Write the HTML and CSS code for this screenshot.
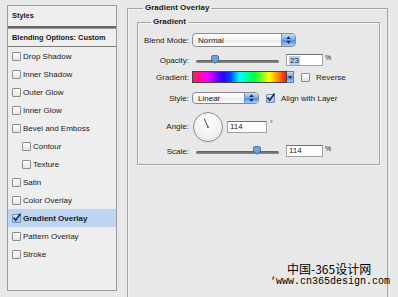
FILE: index.html
```html
<!DOCTYPE html>
<html>
<head>
<meta charset="utf-8">
<title>Layer Style</title>
<link rel="stylesheet" href="styles.css">
</head>
<body>
<div class="dialog">
  <div class="styles-panel">
    <div class="hdr hdr-styles">Styles</div>
    <div class="hdr hdr-blend">Blending Options: Custom</div>
    <ul class="fx-list">
      <li class="fx"><span class="cb"></span>Drop Shadow</li>
      <li class="fx"><span class="cb"></span>Inner Shadow</li>
      <li class="fx"><span class="cb"></span>Outer Glow</li>
      <li class="fx"><span class="cb"></span>Inner Glow</li>
      <li class="fx"><span class="cb"></span>Bevel and Emboss</li>
      <li class="fx sub"><span class="cb"></span>Contour</li>
      <li class="fx sub"><span class="cb"></span>Texture</li>
      <li class="fx"><span class="cb"></span>Satin</li>
      <li class="fx"><span class="cb"></span>Color Overlay</li>
      <li class="fx active"><span class="cb checked"><svg viewBox="0 0 9 9" width="9" height="9"><path d="M1.6 4.4 L3.7 7.2 L8.6 0.6" fill="none" stroke="#1b2a5e" stroke-width="1.7"/></svg></span>Gradient Overlay</li>
      <li class="fx"><span class="cb"></span>Pattern Overlay</li>
      <li class="fx"><span class="cb"></span>Stroke</li>
    </ul>
  </div>

  <fieldset class="group outer">
    <legend>Gradient Overlay</legend>
    <fieldset class="group inner">
      <legend>Gradient</legend>
      <div class="rows">
        <div class="row r-blend">
          <span class="lbl">Blend Mode:</span>
          <div class="popup w-blend">
            <span class="popup-text">Normal</span>
            <span class="stepper"><svg viewBox="0 0 13 12" width="13" height="12"><path d="M4.2 5 L6.5 2.2 L8.8 5 Z M4.2 7 L6.5 9.8 L8.8 7 Z" fill="#1a2c57"/></svg></span>
          </div>
        </div>
        <div class="row r-opacity">
          <span class="lbl">Opacity:</span>
          <div class="slider"><span class="track"></span><span class="thumb" style="left:23%"><svg viewBox="0 0 8 9" width="8" height="9"><path d="M0.5 2 Q0.5 0.5 2 0.5 H6 Q7.5 0.5 7.5 2 V5 L4 8.5 L0.5 5 Z" fill="#6f9fdc" stroke="#3d63a0" stroke-width="0.8"/></svg></span></div>
          <span class="field w-num"><span class="sel">23</span></span>
          <span class="unit">%</span>
        </div>
        <div class="row r-gradient">
          <span class="lbl">Gradient:</span>
          <span class="grad"></span>
          <span class="grad-btn"><svg viewBox="0 0 7 12" width="7" height="12"><path d="M1.3 5 L3.5 8 L5.7 5 Z" fill="#101b3a"/></svg></span>
          <span class="cb cb-gap"></span>
          <span class="cb-label">Reverse</span>
        </div>
        <div class="row r-style">
          <span class="lbl">Style:</span>
          <div class="popup w-style">
            <span class="popup-text">Linear</span>
            <span class="stepper"><svg viewBox="0 0 13 12" width="13" height="12"><path d="M4.2 5 L6.5 2.2 L8.8 5 Z M4.2 7 L6.5 9.8 L8.8 7 Z" fill="#1a2c57"/></svg></span>
          </div>
          <span class="cb checked cb-gap"><svg viewBox="0 0 9 9" width="9" height="9"><path d="M1.6 4.4 L3.7 7.2 L8.6 0.6" fill="none" stroke="#1b2a5e" stroke-width="1.7"/></svg></span>
          <span class="cb-label">Align with Layer</span>
        </div>
        <div class="row r-angle">
          <span class="lbl">Angle:</span>
          <span class="dial"><svg viewBox="0 0 28 28" width="28" height="28"><line x1="14" y1="14" x2="10.2" y2="5.6" stroke="#4a4a4a" stroke-width="1"/><circle cx="14" cy="14" r="0.9" fill="#4a4a4a"/></svg></span>
          <span class="field w-angle">114</span>
          <span class="deg">°</span>
        </div>
        <div class="row r-scale">
          <span class="lbl">Scale:</span>
          <div class="slider"><span class="track"></span><span class="thumb" style="left:74%"><svg viewBox="0 0 8 9" width="8" height="9"><path d="M0.5 2 Q0.5 0.5 2 0.5 H6 Q7.5 0.5 7.5 2 V5 L4 8.5 L0.5 5 Z" fill="#6f9fdc" stroke="#3d63a0" stroke-width="0.8"/></svg></span></div>
          <span class="field w-num">114</span>
          <span class="unit">%</span>
        </div>
      </div>
    </fieldset>
  </fieldset>
</div>

<div class="watermark">
  <div class="wm-cn">中国-365设计网</div>
  <div class="wm-url">‘www.cn365design.com</div>
</div>
</body>
</html>
```

FILE: styles.css
```css
html, body {
  margin: 0;
  padding: 0;
}

body {
  width: 398px;
  height: 297px;
  overflow: hidden;
  position: relative;
  background: #e8e8e8;
  font-family: "Liberation Sans", Arial, sans-serif;
  font-size: 8px;
  color: #1a1a1a;
}

.dialog {
  display: flex;
  align-items: flex-start;
  padding-left: 7px;
}

/* ---------- left styles list ---------- */
.styles-panel {
  margin-top: 5px;
  width: 110px;
  height: 286px;
  box-sizing: border-box;
  border: 1px solid #9b9b9b;
  background: #eeeeee;
  flex: none;
}

.hdr {
  padding-left: 4px;
  font-weight: bold;
  font-size: 7.4px;
  white-space: nowrap;
}

.hdr-styles {
  height: 20px;
  line-height: 20px;
  border-bottom: 2px solid #666666;
}

.hdr-blend {
  height: 17px;
  line-height: 17px;
  border-top: 1px solid #9a9a9a;
  border-bottom: 1px solid #7b7b7b;
}

.fx-list {
  list-style: none;
  margin: 0;
  padding: 0;
}

.fx {
  height: 18px;
  display: flex;
  align-items: center;
  gap: 2px;
  padding-left: 4px;
  white-space: nowrap;
}

.fx.sub {
  padding-left: 14px;
}

.fx.active {
  background: #bdd5f3;
  font-weight: bold;
}

/* ---------- checkbox ---------- */
.cb {
  width: 9px;
  height: 9px;
  box-sizing: border-box;
  border: 1px solid #8e8e8e;
  border-radius: 1px;
  background: linear-gradient(#fdfdfd, #e4e4e4);
  flex: none;
  display: flex;
  align-items: center;
  justify-content: center;
  overflow: visible;
}

.cb svg {
  display: block;
  flex: none;
  margin-top: -1px;
}

.cb.checked {
  background: linear-gradient(#d7e7fa, #9cc0ec);
  border-color: #6f8fb8;
}

.cb-gap {
  margin-left: 7px;
}

.cb-label {
  margin-left: 6px;
  white-space: nowrap;
}

/* ---------- group boxes ---------- */
.group {
  margin: 0;
  padding: 0;
  min-inline-size: 0;
  border: 1px solid #a4a4a4;
  box-sizing: border-box;
}

.group > legend {
  padding: 0 2px;
  height: 10px;
  line-height: 10px;
  font-weight: bold;
  font-size: 8px;
  white-space: nowrap;
}

.outer {
  margin-left: 10px;
  margin-top: 3px;
  width: 261px;
  height: 294px;
  border-bottom: none;
  flex: none;
  box-shadow: inset 1px 1px 0 #f4f4f4;
}

.outer > legend {
  margin-left: 15px;
}

.inner {
  margin: 4px 0 0 9px;
  width: 243px;
  padding: 6px 0 6px 0;
  box-shadow: 1px 1px 0 #f6f6f6, inset 1px 1px 0 #f6f6f6;
}

.inner > legend {
  margin-left: 13px;
}

/* ---------- rows ---------- */
.rows {
  display: flex;
  flex-direction: column;
}

.row {
  display: flex;
  align-items: center;
  height: 14px;
}

.r-opacity { margin-top: 6px; }
.r-gradient { margin-top: 3px; }
.r-style { margin-top: 7px; }
.r-angle { margin-top: 7px; height: 29px; }
.r-scale { margin-top: 3px; }

.lbl {
  width: 51px;
  margin-right: 3px;
  text-align: right;
  white-space: nowrap;
  flex: none;
}

/* ---------- popup buttons ---------- */
.popup {
  display: flex;
  align-items: stretch;
  box-sizing: border-box;
  border: 1px solid #8a8a8a;
  border-radius: 4px;
  overflow: hidden;
  background: linear-gradient(#ffffff, #f4f4f4 50%, #eaeaea 51%, #fbfbfb);
  flex: none;
}

.w-blend {
  width: 104px;
  height: 14px;
}

.w-style {
  width: 67px;
  height: 12px;
}

.popup-text {
  flex: 1;
  padding-left: 5px;
  display: flex;
  align-items: center;
  font-size: 8px;
}

.stepper {
  width: 13px;
  border-left: 1px solid #6f93c6;
  background: linear-gradient(#c9def7, #79aae6 48%, #4f8dde 52%, #a9cbf3);
  display: flex;
  align-items: center;
  justify-content: center;
}

.stepper svg {
  display: block;
}

/* ---------- sliders ---------- */
.slider {
  position: relative;
  width: 83px;
  height: 10px;
  margin-left: 4px;
  flex: none;
  display: flex;
  align-items: center;
}

.track {
  display: block;
  width: 100%;
  height: 3px;
  border-radius: 2px;
  background: linear-gradient(#5e5e5e, #8f8f8f);
  margin-top: 2px;
}

.thumb {
  position: absolute;
  top: 0;
  transform: translateX(-50%);
  width: 8px;
  height: 9px;
}

.thumb svg {
  display: block;
}

/* ---------- text fields ---------- */
.field {
  box-sizing: border-box;
  height: 12px;
  border: 1px solid #a2a2a2;
  border-top-color: #707070;
  background: #ffffff;
  padding-left: 2px;
  line-height: 10px;
  font-size: 8px;
  flex: none;
  display: flex;
  align-items: center;
}

.w-num {
  width: 37px;
  margin-left: 7px;
}

.w-angle {
  width: 40px;
  margin-left: 4px;
}

.sel {
  background: #b3cff3;
  padding: 0 1px;
  line-height: 9px;
}

.unit {
  margin-left: 2px;
  align-self: flex-start;
  margin-top: 1px;
  font-size: 7px;
}

.deg {
  margin-left: 3px;
  align-self: flex-start;
  margin-top: 8px;
  font-size: 7px;
}

/* ---------- gradient swatch ---------- */
.grad {
  width: 95px;
  height: 12px;
  box-sizing: border-box;
  border: 1px solid #444444;
  background: linear-gradient(to right,
    #ff1f40 0%,
    #ff00ff 15%,
    #2a00ff 32%,
    #0040ff 40%,
    #00ffff 50%,
    #00ff40 66%,
    #ffff00 82%,
    #ff1a10 100%);
  flex: none;
}

.grad-btn {
  width: 7px;
  height: 12px;
  box-sizing: border-box;
  background: linear-gradient(#c4dbf6, #6fa3e4 50%, #4e8bdc 51%, #9fc4f0);
  border: 1px solid #5b7fb3;
  border-left: none;
  flex: none;
  display: flex;
  align-items: center;
  justify-content: center;
}

.grad-btn svg {
  display: block;
}

/* ---------- angle dial ---------- */
.dial {
  margin-left: 1px;
  width: 30px;
  height: 30px;
  box-sizing: border-box;
  border: 1px solid #8c8c8c;
  border-radius: 50%;
  background: radial-gradient(circle at 50% 35%, #ffffff 0%, #f2f2f2 55%, #dcdcdc 100%);
  box-shadow: inset 0 -1px 1px rgba(255,255,255,0.8), 0 1px 1px rgba(0,0,0,0.08);
  flex: none;
}

.dial svg {
  display: block;
}

/* ---------- watermark ---------- */
.watermark {
  position: absolute;
  left: 270px;
  top: 262px;
  color: #000000;
}

.wm-cn {
  padding-left: 17px;
  font-family: "Noto Sans CJK SC", "Noto Sans", sans-serif;
  font-size: 12px;
  line-height: 14px;
  white-space: nowrap;
}

.wm-url {
  font-family: "Liberation Mono", monospace;
  font-size: 10px;
  line-height: 12px;
  white-space: nowrap;
}
```
